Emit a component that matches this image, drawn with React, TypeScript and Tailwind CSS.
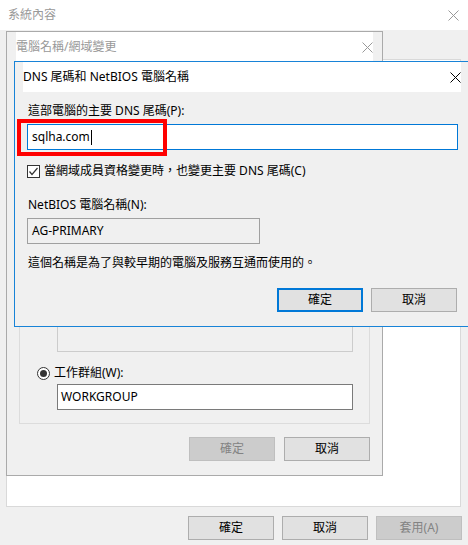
import type { ReactNode } from 'react'

const font = "font-['Noto_Sans','Noto_Sans_CJK_TC',sans-serif]"

function CloseX({ color }: { color: string }) {
  return (
    <svg width="11" height="11" viewBox="0 0 11 11" className="block">
      <path d="M0.5 0.5 L10.5 10.5 M10.5 0.5 L0.5 10.5" stroke={color} strokeWidth="1" fill="none" />
    </svg>
  )
}

function Btn({ children, kind = 'normal' }: { children: ReactNode; kind?: 'normal' | 'default' | 'disabled' }) {
  const look =
    kind === 'default'
      ? 'border-2 border-[#0078d7] bg-[#e1e1e1] text-black'
      : kind === 'disabled'
        ? 'border border-[#bfbfbf] bg-[#cccccc] text-[#838383]'
        : 'border border-[#adadad] bg-[#e1e1e1] text-black'
  return (
    <div className={`flex h-[24px] w-[86px] items-center justify-center text-[12px] leading-[16px] ${look}`}>
      {children}
    </div>
  )
}

function TitleBar({ title, active }: { title: string; active?: boolean }) {
  return (
    <div className="flex h-[30px] shrink-0 items-center justify-between bg-white">
      <span className={`text-[12px] leading-[16px] ${active ? 'text-black' : 'text-[#999999]'}`}>{title}</span>
      <CloseX color={active ? '#000000' : '#999999'} />
    </div>
  )
}

export default function App() {
  return (
    <div className={`relative h-[545px] w-[468px] overflow-hidden bg-[#f0f0f0] ${font}`}>
      {/* 系統內容 — back window */}
      <div className="flex h-full flex-col">
        <div className="flex h-[30px] items-center justify-between bg-white pl-[8px] pr-[9px]">
          <span className="text-[12px] leading-[16px] text-[#999999]">系統內容</span>
          <CloseX color="#999999" />
        </div>
        <div className="ml-[6px] mt-[29px] h-[448px] w-[455px] border border-[#d9d9d9] bg-white" />
        <div className="mt-[9px] flex justify-end gap-[9px] pr-[6px]">
          <Btn>確定</Btn>
          <div className="-ml-[1px]">
            <Btn>取消</Btn>
          </div>
          <div className="-ml-[1px]">
            <Btn kind="disabled">套用(A)</Btn>
          </div>
        </div>
      </div>

      {/* 電腦名稱/網域變更 — middle window */}
      <div className="absolute left-[6px] top-[31px] flex h-[445px] w-[377px] flex-col border border-[#aaaaaa] bg-[#f0f0f0]">
        <div className="pl-[9px] pr-[9px]">
          <TitleBar title="電腦名稱/網域變更" />
        </div>
        <div className="flex flex-1 flex-col justify-end pb-[14px]">
          <div className="ml-[12px] flex w-[351px] flex-col border border-[#dcdcdc] pb-[13px] pl-[17px]">
            <div className="mt-[8px] flex h-[16px] items-center gap-[4px] text-[12px] leading-[16px]">
              <span className="h-[13px] w-[13px] rounded-full border border-[#333333] bg-white" />
              網域(D):
            </div>
            <div className="ml-[20px] mt-[3px] h-[26px] w-[296px] border border-[#cccccc] bg-[#f0f0f0]" />
            <div className="mt-[13px] flex h-[16px] items-center gap-[4px] text-[12px] leading-[16px] text-black">
              <span className="flex h-[13px] w-[13px] items-center justify-center rounded-full border border-[#333333] bg-white">
                <span className="h-[7px] w-[7px] rounded-full bg-[#333333]" />
              </span>
              工作群組(W):
            </div>
            <div className="ml-[20px] mt-[3px] flex h-[26px] w-[296px] items-center border border-[#7a7a7a] bg-white pl-[3px] text-[12px] leading-[16px]">
              WORKGROUP
            </div>
          </div>
          <div className="mt-[13px] flex justify-end gap-[9px] pr-[12px]">
            <Btn kind="disabled">確定</Btn>
            <Btn>取消</Btn>
          </div>
        </div>
      </div>

      {/* DNS 尾碼和 NetBIOS 電腦名稱 — active dialog */}
      <div className="absolute left-[14px] top-[61px] flex h-[266px] w-[457px] flex-col border border-[#1883d7] bg-[#f0f0f0] text-black">
        <div className="pl-[8px] pr-[9px]">
          <TitleBar title="DNS 尾碼和 NetBIOS 電腦名稱" active />
        </div>
        <div className="flex flex-col pl-[12px] pr-[12px] pt-[11px] text-[12px] leading-[16px]">
          <div className="h-[16px] pl-[1px]">這部電腦的主要 DNS 尾碼(P):</div>
          <div className="relative mt-[5px]">
            <div className="flex h-[26px] w-[431px] items-center border border-[#0078d7] bg-white pl-[4px]">
              sqlha.com
              <span className="ml-[1px] h-[15px] w-px bg-black" />
            </div>
            <div className="absolute -left-[10px] -top-[5px] h-[37px] w-[150px] border-4 border-[#ff0000]" />
          </div>
          <div className="mt-[13px] flex h-[16px] items-center gap-[4px]">
            <span className="flex h-[13px] w-[13px] items-center justify-center border border-[#333333] bg-white">
              <svg width="11" height="11" viewBox="0 0 11 11">
                <path d="M1.5 5.5 L4 8.5 L9.5 2" stroke="#333333" strokeWidth="1.2" fill="none" />
              </svg>
            </span>
            當網域成員資格變更時，也變更主要 DNS 尾碼(C)
          </div>
          <div className="mt-[18px] h-[16px] pl-[1px]">NetBIOS 電腦名稱(N):</div>
          <div className="mt-[5px] flex h-[26px] w-[233px] items-center border border-[#a0a0a0] bg-[#f0f0f0] pl-[4px]">
            AG-PRIMARY
          </div>
          <div className="mt-[11px] h-[16px] pl-[1px]">這個名稱是為了與較早期的電腦及服務互通而使用的。</div>
          <div className="mt-[17px] flex justify-end gap-[8px] pr-[1px]">
            <Btn kind="default">確定</Btn>
            <Btn>取消</Btn>
          </div>
        </div>
      </div>
    </div>
  )
}
